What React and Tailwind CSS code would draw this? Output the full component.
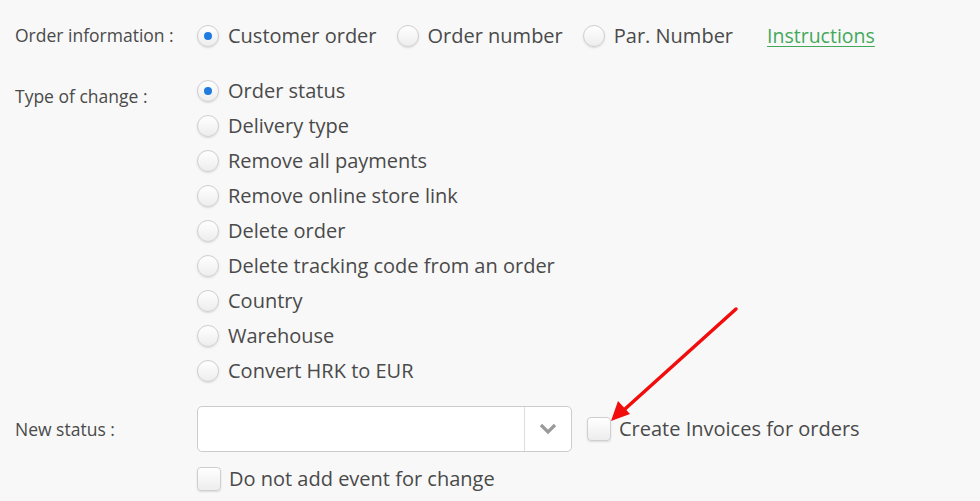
import React from 'react';

const font = { fontFamily: '"Open Sans", "Noto Sans", sans-serif' };

const Radio = ({ checked }) => (
  <span className="flex h-[22px] w-[22px] shrink-0 items-center justify-center rounded-full border border-[#cfcfcf] bg-gradient-to-b from-white to-[#ededed] shadow-[0_1px_2px_rgba(0,0,0,0.12)]">
    {checked && <span className="h-[8px] w-[8px] rounded-full bg-[#1f7be0]" />}
  </span>
);

const Check = () => (
  <span className="block h-[24px] w-[24px] shrink-0 rounded-[4px] border border-[#cfcfcf] bg-gradient-to-b from-white to-[#ededed] shadow-[0_1px_2px_rgba(0,0,0,0.12)]" />
);

const Option = ({ checked, label }) => (
  <label className="flex h-[35px] items-center gap-[9px]">
    <Radio checked={checked} />
    <span className="text-[20px] text-[#4a4a4a]">{label}</span>
  </label>
);

const changeTypes = [
  'Order status',
  'Delivery type',
  'Remove all payments',
  'Remove online store link',
  'Delete order',
  'Delete tracking code from an order',
  'Country',
  'Warehouse',
  'Convert HRK to EUR',
];

export default function App() {
  return (
    <div className="relative h-[501px] w-[980px] overflow-hidden bg-[#f8f8f8] pl-[15px] pt-[18px]" style={font}>
      <div className="flex h-[35px] items-center">
        <div className="w-[182px] text-[17.5px] text-[#4a4a4a]">Order information :</div>
        <div className="flex items-center">
          <Option checked label="Customer order" />
          <div className="ml-[20px]"><Option label="Order number" /></div>
          <div className="ml-[20px]"><Option label="Par. Number" /></div>
          <a href="#" className="ml-[34px] text-[19.5px] text-[#43a85a] underline underline-offset-[3px]">Instructions</a>
        </div>
      </div>

      <div className="mt-[20px] flex">
        <div className="w-[182px] pt-[10px] text-[17.5px] text-[#4a4a4a]">Type of change :</div>
        <div className="flex flex-col">
          {changeTypes.map((t, i) => (
            <Option key={t} checked={i === 0} label={t} />
          ))}
        </div>
      </div>

      <div className="mt-[18px] flex items-center">
        <div className="w-[182px] text-[17.5px] text-[#4a4a4a]">New status :</div>
        <div className="flex h-[46px] w-[375px] items-stretch rounded-[5px] border border-[#cccccc] bg-white">
          <div className="flex-1" />
          <div className="flex w-[47px] items-center justify-center border-l border-[#dddddd]">
            <svg width="18" height="12" viewBox="0 0 18 12">
              <path d="M2 2 L9 9 L16 2" fill="none" stroke="#9a9a9a" strokeWidth="3.2" />
            </svg>
          </div>
        </div>
        <label className="ml-[15px] flex items-center gap-[8px]">
          <Check />
          <span className="text-[20px] text-[#4a4a4a]">Create Invoices for orders</span>
        </label>
      </div>

      <label className="ml-[182px] mt-[12px] flex items-center gap-[8px]">
        <Check />
        <span className="text-[20px] text-[#4a4a4a]">Do not add event for change</span>
      </label>

      <svg className="pointer-events-none absolute left-0 top-0" width="980" height="501">
        <line x1="736" y1="309" x2="625" y2="409" stroke="#f20d0d" strokeWidth="3.5" strokeLinecap="round" />
        <polygon points="611,421 618,401 630,414" fill="#f20d0d" />
      </svg>
    </div>
  );
}
